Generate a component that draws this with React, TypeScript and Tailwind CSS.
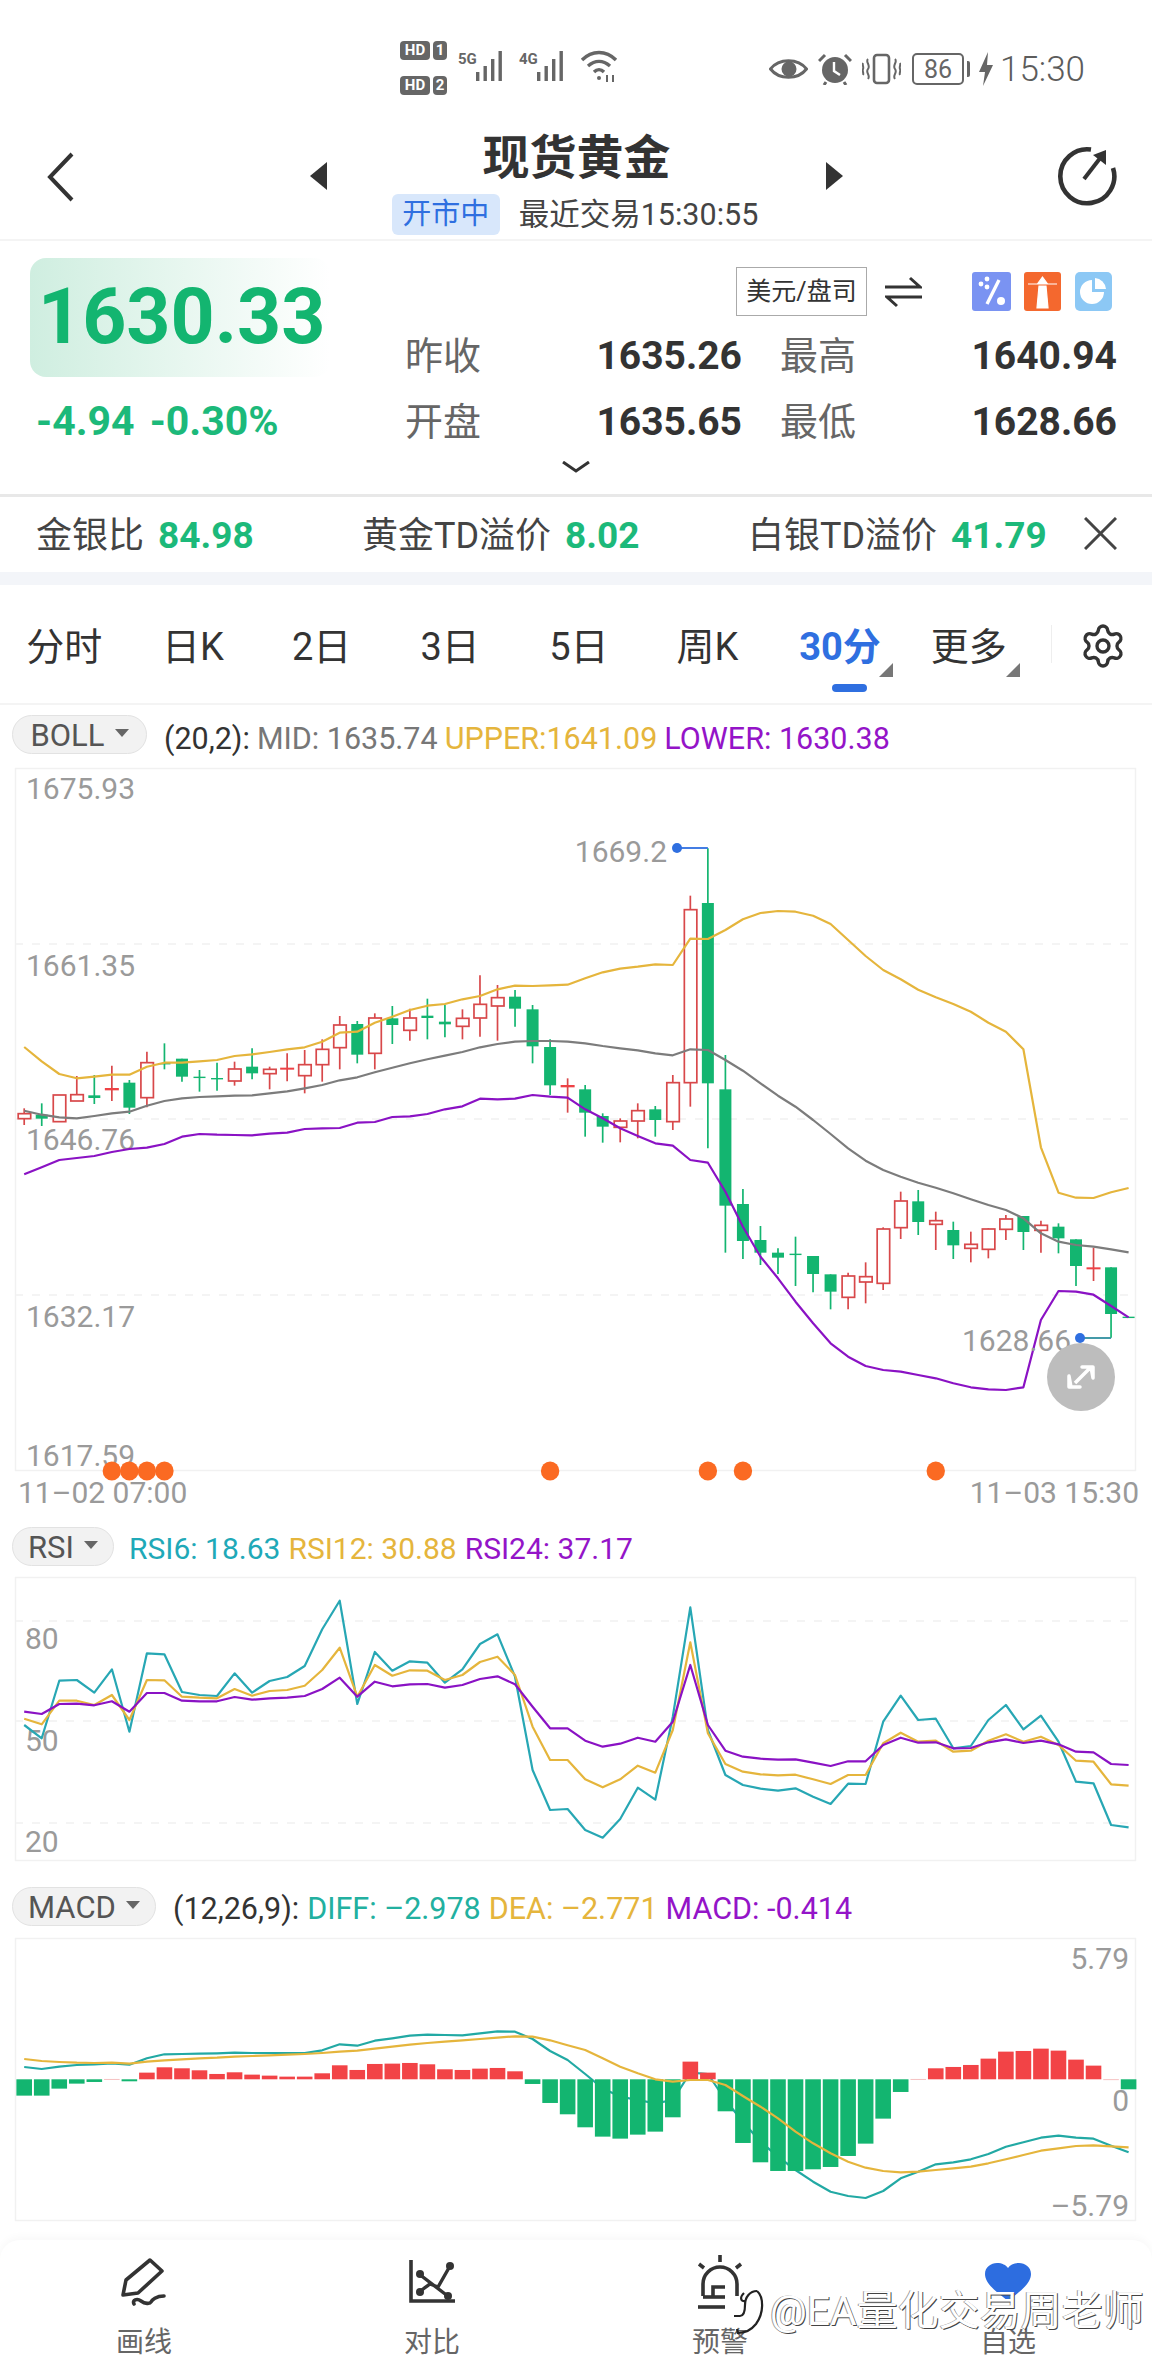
import React from 'react';
import { Settings } from 'lucide-react';

// all chart numbers are read off 3x crops: y = top + value / 3, x comes from the candle index
const cx = (i: number) => 24.2 + 17.53 * i;

type Candle = [number, number, number, number, 'r' | 'g'];

const candles: Candle[] = [
  [1165, 1181, 1196, 1215, 'r'], [1150, 1184, 1196, 1218, 'g'], [1125, 1125, 1205, 1205, 'r'], [1068, 1124, 1143, 1143, 'r'],
  [1065, 1126, 1134, 1152, 'g'], [1037, 1104, 1111, 1143, 'r'], [1080, 1088, 1163, 1182, 'g'], [995, 1028, 1133, 1162, 'r'],
  [970, 1029, 1031, 1048, 'g'], [1016, 1016, 1070, 1085, 'g'], [1050, 1070, 1073, 1115, 'g'], [1028, 1074, 1076, 1112, 'g'],
  [1025, 1047, 1083, 1097, 'r'], [985, 1040, 1060, 1078, 'g'], [1040, 1048, 1061, 1108, 'r'], [1000, 1043, 1047, 1084, 'r'],
  [990, 1034, 1067, 1120, 'r'], [958, 988, 1034, 1085, 'r'], [888, 915, 983, 1048, 'r'], [903, 912, 1004, 1030, 'g'],
  [880, 894, 1000, 1048, 'r'], [858, 895, 915, 972, 'g'], [866, 894, 931, 962, 'r'], [836, 887, 894, 958, 'g'],
  [855, 905, 913, 952, 'g'], [868, 895, 919, 958, 'r'], [766, 853, 894, 950, 'r'], [795, 833, 858, 962, 'r'],
  [810, 830, 866, 920, 'g'], [855, 868, 979, 1030, 'g'], [958, 981, 1096, 1125, 'g'], [1075, 1095, 1102, 1178, 'r'],
  [1095, 1108, 1178, 1250, 'g'], [1180, 1188, 1220, 1268, 'g'], [1195, 1203, 1222, 1267, 'r'], [1150, 1172, 1203, 1255, 'r'],
  [1158, 1168, 1200, 1250, 'g'], [1065, 1088, 1205, 1230, 'r'], [527, 569, 1088, 1160, 'r'], [385, 549, 1090, 1285, 'g'],
  [1005, 1108, 1457, 1598, 'g'], [1407, 1452, 1563, 1617, 'g'], [1518, 1560, 1598, 1635, 'g'], [1585, 1598, 1613, 1662, 'g'],
  [1550, 1601, 1605, 1698, 'g'], [1608, 1608, 1662, 1717, 'g'], [1663, 1663, 1715, 1768, 'g'], [1658, 1668, 1732, 1768, 'r'],
  [1627, 1670, 1686, 1750, 'r'], [1522, 1527, 1690, 1710, 'r'], [1415, 1443, 1523, 1557, 'r'], [1410, 1444, 1506, 1545, 'g'],
  [1475, 1502, 1513, 1590, 'r'], [1505, 1530, 1576, 1617, 'g'], [1535, 1573, 1585, 1627, 'r'], [1525, 1527, 1588, 1615, 'r'],
  [1485, 1497, 1528, 1560, 'r'], [1488, 1488, 1536, 1590, 'g'], [1502, 1516, 1531, 1598, 'r'], [1510, 1520, 1555, 1600, 'g'],
  [1558, 1558, 1638, 1698, 'g'], [1583, 1642, 1646, 1683, 'r'], [1642, 1642, 1782, 1853, 'g'], [1791, 1790, 1792, 1793, 'g'],
];

const upper = [981, 1024, 1062, 1075, 1070, 1064, 1064, 1040, 1028, 1028, 1024, 1020, 1008, 1003, 996, 988, 982, 965, 938, 935, 908, 890, 870, 857, 852, 838, 828, 808, 797, 798, 796, 794, 775, 757, 746, 740, 733, 735, 656, 657, 630, 598, 579, 573, 575, 587, 612, 660, 708, 750, 778, 809, 832, 852, 875, 908, 935, 988, 1282, 1418, 1433, 1434, 1417, 1404];
const middle = [1172, 1184, 1192, 1195, 1188, 1180, 1175, 1157, 1143, 1135, 1131, 1129, 1127, 1126, 1120, 1114, 1105, 1095, 1081, 1072, 1057, 1043, 1030, 1018, 1007, 996, 982, 972, 965, 963, 963, 965, 970, 978, 985, 991, 1000, 1006, 988, 990, 1020, 1052, 1090, 1127, 1160, 1200, 1242, 1285, 1322, 1350, 1370, 1388, 1403, 1420, 1438, 1455, 1470, 1495, 1540, 1565, 1575, 1580, 1588, 1597];
const lower = [1363, 1342, 1320, 1314, 1308, 1296, 1287, 1283, 1272, 1250, 1242, 1244, 1245, 1246, 1241, 1238, 1227, 1225, 1224, 1208, 1206, 1191, 1189, 1182, 1168, 1159, 1136, 1138, 1136, 1125, 1130, 1133, 1168, 1195, 1225, 1248, 1270, 1277, 1320, 1328, 1415, 1520, 1610, 1675, 1745, 1810, 1870, 1910, 1938, 1950, 1955, 1965, 1975, 1990, 2002, 2008, 2010, 2002, 1800, 1713, 1715, 1724, 1758, 1792];

const rsi6 = [675, 715, 542, 540, 578, 508, 695, 460, 463, 576, 585, 588, 520, 578, 543, 531, 498, 388, 302, 612, 456, 512, 484, 488, 548, 508, 432, 403, 530, 810, 930, 927, 990, 1013, 957, 863, 899, 650, 322, 690, 825, 855, 866, 872, 865, 890, 912, 851, 852, 665, 587, 660, 656, 745, 738, 660, 615, 688, 647, 725, 845, 850, 975, 982];
const rsi12 = [656, 673, 602, 602, 615, 585, 660, 540, 541, 590, 593, 595, 567, 587, 573, 570, 557, 510, 443, 590, 495, 527, 511, 512, 540, 525, 486, 470, 525, 680, 780, 780, 838, 862, 838, 797, 818, 690, 427, 700, 792, 815, 823, 826, 824, 838, 852, 825, 825, 730, 698, 725, 722, 755, 752, 722, 703, 725, 710, 735, 782, 785, 853, 857];
const rsi24 = [635, 642, 612, 611, 616, 604, 635, 579, 579, 602, 604, 604, 591, 599, 595, 593, 588, 567, 533, 590, 545, 559, 553, 552, 563, 555, 537, 529, 553, 620, 685, 685, 722, 740, 731, 713, 725, 665, 495, 675, 752, 770, 776, 779, 778, 788, 798, 784, 784, 735, 713, 728, 727, 745, 744, 727, 718, 729, 722, 733, 755, 757, 792, 795];

const histogram = [-49, -49, -28, -13, -8, 1, -6, 20, 36, 33, 27, 16, 21, 14, 11, 8, 8, 18, 42, 28, 46, 47, 49, 45, 30, 28, 32, 34, 24, -14, -71, -105, -144, -172, -178, -166, -157, -114, 53, 20, -96, -191, -249, -275, -275, -270, -263, -230, -193, -118, -38, 1, 33, 37, 43, 62, 83, 85, 92, 86, 59, 41, -2, -30];
const diff = [591, 597, 590, 585, 583, 580, 584, 565, 553, 552, 551, 550, 548, 549, 549, 549, 549, 541, 523, 527, 512, 505, 497, 494, 495, 496, 490, 484, 485, 507, 543, 570, 612, 655, 680, 690, 700, 690, 608, 612, 690, 755, 815, 860, 900, 935, 965, 978, 984, 963, 925, 905, 883, 877, 868, 852, 830, 817, 803, 797, 803, 806, 827, 847];
const dea = [567, 573, 576, 578, 579, 578, 581, 575, 571, 568, 565, 563, 560, 558, 556, 554, 552, 549, 545, 542, 536, 530, 524, 519, 515, 511, 507, 503, 499, 500, 511, 526, 540, 565, 590, 610, 628, 635, 630, 630, 645, 678, 710, 745, 785, 820, 850, 875, 893, 903, 907, 905, 900, 895, 890, 880, 868, 855, 842, 835, 828, 826, 829, 832];

const RED = '#d8484a';
const GREEN = '#13b570';
const GOLD = '#e5b53c';

function Line({ ys, top, color, width = 2.2 }: { ys: number[]; top: number; color: string; width?: number }) {
  const points = ys.map((y, i) => `${cx(i).toFixed(1)},${(top + y / 3).toFixed(1)}`).join(' ');
  return <polyline points={points} fill="none" stroke={color} strokeWidth={width} strokeLinejoin="round" />;
}

function Frame({ x, y, w, h, rows }: { x: number; y: number; w: number; h: number; rows: number[] }) {
  return (
    <>
      <rect x={x + 0.5} y={y + 0.5} width={w - 1} height={h - 1} fill="#fff" stroke="#f1f1f1" strokeWidth="1.5" />
      {rows.map((r) => (
        <line key={r} x1={x} x2={x + w} y1={r} y2={r} stroke="#f1f1f1" strokeWidth="1.5" strokeDasharray="8 9" />
      ))}
    </>
  );
}

function CandleMark({ c, i }: { c: Candle; i: number }) {
  const [wt, bt, bb, wb, kind] = c;
  const x = cx(i);
  const y = (z: number) => 720 + z / 3;
  if (kind === 'g') {
    const thin = bb - bt < 6;
    return (
      <g>
        <line x1={x} x2={x} y1={y(wt)} y2={y(wb)} stroke={GREEN} strokeWidth="1.7" />
        <rect x={x - 6} y={y(bt)} width="12" height={Math.max((bb - bt) / 3, thin ? 1.4 : 2)} fill={GREEN} />
      </g>
    );
  }
  if (bb - bt < 10) {
    return (
      <g>
        <line x1={x} x2={x} y1={y(wt)} y2={y(wb)} stroke={RED} strokeWidth="1.7" />
        <rect x={x - 7} y={y(bt)} width="14" height={Math.max((bb - bt) / 3, 2)} fill="#ee4246" />
      </g>
    );
  }
  return (
    <g>
      <line x1={x} x2={x} y1={y(wt)} y2={y(bt)} stroke={RED} strokeWidth="1.7" />
      <line x1={x} x2={x} y1={y(bb)} y2={y(wb)} stroke={RED} strokeWidth="1.7" />
      <rect x={x - 6} y={y(bt)} width="12.5" height={(bb - bt) / 3} fill="#fff" stroke={RED} strokeWidth="1.7" />
    </g>
  );
}

function MainChart() {
  const axis = 'fill-[#9a9a9a] text-[30px]';
  return (
    <svg viewBox="15 768 1121 703" className="relative z-10 ml-[15px] block h-[703px] w-[1121px] overflow-visible">
      <Frame x={15} y={768} w={1121} h={703} rows={[944, 1119, 1295]} />
      <text x="26" y="799" className={axis}>1675.93</text>
      <text x="26" y="976" className={axis}>1661.35</text>
      <text x="26" y="1150" className={axis}>1646.76</text>
      <text x="26" y="1327" className={axis}>1632.17</text>
      <text x="26" y="1466" className={axis}>1617.59</text>
      {candles.map((c, i) => (
        <CandleMark key={i} c={c} i={i} />
      ))}
      <Line ys={middle} top={720} color="#7c7c7c" />
      <Line ys={upper} top={720} color={GOLD} />
      <Line ys={lower} top={720} color="#8a12c4" />
      <path d={`M677 848H${cx(39)}`} stroke="#2f6fe0" strokeWidth="1.8" fill="none" />
      <circle cx="677" cy="848" r="5" fill="#2f6fe0" />
      <text x="667" y="862" textAnchor="end" className={axis}>1669.2</text>
      <path d={`M1080 1338H${cx(62)}`} stroke="#2f8fa0" strokeWidth="1.8" fill="none" />
      <circle cx="1080" cy="1338" r="5" fill="#2f6fe0" />
      <text x="962" y="1351" className={axis}>1628.66</text>
      <circle cx="1081" cy="1377" r="34" fill="#bdbdbd" />
      <path d="M1091 1367l-16 16M1071 1387l-2-11-0 11h11zM1091 1367l2 11 0-11h-11z" stroke="#fff" strokeWidth="3.5" fill="#fff" strokeLinejoin="round" />
      {[5, 6, 7, 8, 30, 39, 41, 52].map((i) => (
        <ellipse key={i} cx={cx(i)} cy="1471" rx="9.2" ry="9.4" fill="#fb6a22" />
      ))}
    </svg>
  );
}

function RsiChart() {
  const axis = 'fill-[#9a9a9a] text-[30px]';
  return (
    <svg viewBox="15 1577 1121 284" className="ml-[15px] block h-[284px] w-[1121px] overflow-visible">
      <Frame x={15} y={1577} w={1121} h={284} rows={[1621, 1721, 1823]} />
      <text x="25" y="1649" className={axis}>80</text>
      <text x="25" y="1751" className={axis}>50</text>
      <text x="25" y="1852" className={axis}>20</text>
      <Line ys={rsi6} top={1500} color="#27a7b4" />
      <Line ys={rsi12} top={1500} color={GOLD} />
      <Line ys={rsi24} top={1500} color="#8a12c4" />
    </svg>
  );
}

function MacdChart() {
  const axis = 'fill-[#9a9a9a] text-[30px]';
  return (
    <svg viewBox="15 1938 1121 283" className="ml-[15px] block h-[283px] w-[1121px] overflow-visible">
      <Frame x={15} y={1938} w={1121} h={283} rows={[]} />
      <Line ys={diff} top={1870} color="#22a9a4" />
      {histogram.map((v, i) => (
        <rect
          key={i}
          x={cx(i) - 7.8}
          y={v > 0 ? 2079.3 - v / 3 : 2079.3}
          width="15.6"
          height={Math.max(Math.abs(v) / 3, 0.8)}
          fill={Math.abs(v) < 3 ? '#f3b3b3' : v > 0 ? '#f24346' : GREEN}
        />
      ))}
      <Line ys={dea} top={1870} color={GOLD} />
      <text x="1129" y="1969" textAnchor="end" className={axis}>5.79</text>
      <text x="1129" y="2111" textAnchor="end" className={axis}>0</text>
      <text x="1129" y="2216" textAnchor="end" className={axis}>–5.79</text>
    </svg>
  );
}

function Pill({ label, width }: { label: string; width: string }) {
  return (
    <div className={`flex h-[39px] items-center justify-center gap-[10px] rounded-full border border-[#e2e2e2] bg-[#f2f2f2] text-[31px] text-[#555] ${width}`}>
      <span className="pt-[3px]">{label}</span>
      <span className="mt-[-4px] h-0 w-0 border-x-[7px] border-t-[8px] border-x-transparent border-t-[#666]" />
    </div>
  );
}

function Bars() {
  return (
    <svg width="33" height="30" viewBox="0 0 33 30" fill="#666">
      <rect x="0" y="21" width="3.4" height="9" />
      <rect x="7.5" y="15" width="3.4" height="15" />
      <rect x="15" y="8" width="3.4" height="22" />
      <rect x="22.5" y="0" width="3.4" height="30" />
    </svg>
  );
}

function StatusBar() {
  return (
    <div className="flex h-[128px] pl-[400px] pt-[41px]">
      <div className="flex flex-col gap-[16px] text-[15px] font-bold leading-none text-white">
        <div className="flex gap-[3px]">
          <span className="flex h-[19px] w-[30px] items-center justify-center rounded-[4px] bg-[#666]">HD</span>
          <span className="flex h-[19px] w-[14px] items-center justify-center rounded-[4px] bg-[#666]">1</span>
        </div>
        <div className="flex gap-[3px]">
          <span className="flex h-[19px] w-[30px] items-center justify-center rounded-[4px] bg-[#666]">HD</span>
          <span className="flex h-[19px] w-[14px] items-center justify-center rounded-[4px] bg-[#666]">2</span>
        </div>
      </div>
      <div className="ml-[11px] flex h-[42px] items-start gap-[10px] text-[#666]">
        <div className="flex items-start pt-[10px]">
          <span className="mt-[1px] w-[18px] text-[15px] font-bold leading-none">5G</span>
          <Bars />
        </div>
        <div className="flex items-start pt-[10px]">
          <span className="mt-[1px] w-[18px] text-[15px] font-bold leading-none">4G</span>
          <Bars />
        </div>
        <svg width="38" height="34" viewBox="0 0 38 34" fill="none" stroke="#666" strokeWidth="3.4" className="mt-[9px]">
          <path d="M2 10c10-10 24-10 34 0M8 16c7-6 15-6 22 0M14 22c3-3 7-3 10 0" />
          <circle cx="19" cy="28" r="2" fill="#666" stroke="none" />
          <path d="M27 25v7M33 25v7" strokeWidth="2" />
        </svg>
      </div>
      <div className="ml-[151px] flex h-[56px] items-center text-[#666]">
        <svg width="39" height="24" viewBox="0 0 39 24">
          <path d="M1.5 12C10 1 29 1 37.5 12 29 23 10 23 1.5 12z" fill="none" stroke="#666" strokeWidth="3" />
          <circle cx="20" cy="12" r="7.5" fill="#666" />
        </svg>
        <svg width="34" height="32" viewBox="0 0 34 32" className="ml-[10px]">
          <circle cx="17" cy="17" r="13" fill="#666" />
          <path d="M16 9v9l6 4" stroke="#fff" strokeWidth="2.4" fill="none" />
          <path d="M1 8l6-6M33 8l-6-6M8 29l-2 3M26 29l2 3" stroke="#666" strokeWidth="3" />
        </svg>
        <svg width="39" height="32" viewBox="0 0 39 32" fill="none" stroke="#666" strokeWidth="2.6" className="ml-[10px]">
          <rect x="12" y="2" width="15" height="28" rx="3" />
          <path d="M6 6c-3 3 3 6 0 10s3 6 0 10M1 10c-1 2 1 4 0 6s1 4 0 6M33 6c3 3-3 6 0 10s-3 6 0 10M38 10c1 2-1 4 0 6s-1 4 0 6" strokeWidth="2" />
        </svg>
        <div className="ml-[11px] flex h-[32px] w-[52px] items-center justify-center rounded-[5px] border-[2px] border-[#666] text-[25px] leading-none">86</div>
        <span className="ml-[3px] h-[16px] w-[3px] rounded-r-[2px] bg-[#666]" />
        <svg width="16" height="34" viewBox="0 0 16 34" fill="#666" className="ml-[8px]">
          <path d="M10 0L1 20h6l-2 14 10-21H9z" />
        </svg>
        <span className="ml-[6px] text-[35px] font-light leading-none text-[#5c5c5c]">15:30</span>
      </div>
    </div>
  );
}

function Header() {
  return (
    <div className="flex h-[113px] border-b-[2px] border-[#f4f4f4]">
      <div className="flex w-[310px] pl-[47px] pt-[24px]">
        <svg width="28" height="50" viewBox="0 0 28 50" fill="none" stroke="#333" strokeWidth="4">
          <path d="M25 2L3 25l22 23" />
        </svg>
      </div>
      <div className="mt-[34px] h-0 w-0 border-y-[14px] border-r-[17px] border-y-transparent border-r-[#333]" />
      <div className="flex w-[499px] flex-col items-center">
        <div className="mt-[3px] text-[47px] font-bold leading-[54px] text-[#333]">现货黄金</div>
        <div className="mt-[7px] flex items-center pr-[3px]">
          <span className="flex h-[41px] w-[108px] items-center justify-center rounded-[6px] bg-[#d8e7fb] text-[29px] text-[#2f6fe0]">开市中</span>
          <span className="ml-[19px] text-[30.5px] text-[#444]">最近交易15:30:55</span>
        </div>
      </div>
      <div className="mt-[34px] h-0 w-0 border-y-[14px] border-l-[17px] border-y-transparent border-l-[#333]" />
      <div className="ml-[214px] pt-[18px]">
        <svg width="60" height="60" viewBox="0 0 60 60" fill="none" stroke="#333" strokeWidth="4.6">
          <path d="M34 3.5A27 27 0 1 0 56 22" />
          <path d="M27 33L44 11" strokeWidth="4" />
          <path d="M36 9l13-5 0 15z" fill="#333" stroke="none" />
        </svg>
      </div>
    </div>
  );
}

function Quote({ label, value }: { label: string; value: string }) {
  return (
    <div className="flex w-[337px] items-center justify-between">
      <span className="text-[38px] text-[#666]">{label}</span>
      <span className="text-[39px] font-bold text-[#333]">{value}</span>
    </div>
  );
}

function Summary() {
  return (
    <div className="h-[256px] border-b-[3px] border-[#e8e8e8]">
      <div className="flex h-[214px]">
        <div className="w-[405px] pl-[30px] pt-[17px]">
          <div className="flex h-[119px] w-[300px] items-center rounded-[16px] bg-gradient-to-r from-[#cfeee0] to-white pl-[8px]">
            <span className="text-[77px] font-bold leading-none text-[#13b570]">1630.33</span>
          </div>
          <div className="mt-[23px] flex h-[44px] items-center gap-[15px] pl-[6px] text-[41px] font-bold text-[#1cb97a]">
            <span>-4.94</span>
            <span>-0.30%</span>
          </div>
        </div>
        <div className="w-[712px]">
          <div className="mt-[26px] flex h-[49px] items-center justify-end">
            <span className="flex h-[49px] w-[131px] items-center justify-center border border-[#aaa] text-[25px] text-[#333]">美元/盘司</span>
            <svg width="37" height="32" viewBox="0 0 37 32" fill="none" stroke="#333" strokeWidth="3" className="ml-[18px]">
              <path d="M0 11h35L25 2M37 21H2l10 9" />
            </svg>
            <svg width="39" height="39" viewBox="0 0 39 39" className="ml-[50px]">
              <rect width="39" height="39" rx="3" fill="#7a93f2" />
              <path d="M27 8L15 32" stroke="#fff" strokeWidth="3.4" />
              <circle cx="9" cy="12" r="2.4" fill="#fff" /><circle cx="15" cy="7" r="2.4" fill="#fff" /><circle cx="15" cy="15" r="2.4" fill="#fff" />
              <circle cx="29" cy="29" r="4" fill="#fff" />
            </svg>
            <svg width="37" height="39" viewBox="0 0 37 39" className="ml-[13px]">
              <rect width="37" height="39" rx="3" fill="#f4682e" />
              <path d="M4 12h29M18.5 5l5 7h-10zM15 14h7l2 22H13z" fill="#fff" stroke="#fff" strokeWidth="1.2" />
            </svg>
            <svg width="37" height="39" viewBox="0 0 37 39" className="ml-[14px] mr-[5px]">
              <rect width="37" height="39" rx="5" fill="#8cc8f5" />
              <path d="M17 8a12 12 0 1 0 12 12H17z" fill="#fff" />
              <path d="M20 6a12 12 0 0 1 11 11H20z" fill="#fff" />
            </svg>
          </div>
          <div className="mt-[7px] flex h-[66px] gap-[38px]">
            <Quote label="昨收" value="1635.26" />
            <Quote label="最高" value="1640.94" />
          </div>
          <div className="flex h-[66px] gap-[38px]">
            <Quote label="开盘" value="1635.65" />
            <Quote label="最低" value="1628.66" />
          </div>
        </div>
      </div>
      <div className="mt-[6px] flex justify-center">
        <svg width="28" height="12" viewBox="0 0 28 12" fill="none" stroke="#333" strokeWidth="3">
          <path d="M1 1l13 9L27 1" />
        </svg>
      </div>
    </div>
  );
}

function Spread({ label, value, width }: { label: string; value: string; width: string }) {
  return (
    <div className={`flex items-center gap-[14px] ${width}`}>
      <span className="text-[36px] text-[#444]">{label}</span>
      <span className="text-[37px] font-bold text-[#1cb97a]">{value}</span>
    </div>
  );
}

function SpreadRow() {
  return (
    <div className="flex h-[75px] items-center pl-[36px] pt-[3px]">
      <Spread label="金银比" value="84.98" width="w-[326px]" />
      <Spread label="黄金TD溢价" value="8.02" width="w-[386px]" />
      <Spread label="白银TD溢价" value="41.79" width="w-[336px]" />
      <svg width="33" height="33" viewBox="0 0 33 33" fill="none" stroke="#444" strokeWidth="3" className="mt-[-6px]">
        <path d="M1 1l31 31M32 1L1 32" />
      </svg>
    </div>
  );
}

const tabs = ['分时', '日K', '2日', '3日', '5日', '周K'];

function Tabs() {
  return (
    <div className="flex h-[120px] border-b-[2px] border-[#f4f4f4]">
      <div className="grid w-[1029px] grid-cols-8">
        {tabs.map((t) => (
          <div key={t} className="flex h-[124px] items-center justify-center text-[38px] text-[#333]">{t}</div>
        ))}
        <div className="relative flex h-[124px] items-center justify-center pl-[8px] text-[38px] font-bold text-[#2f6fe0]">
          30分
          <span className="absolute left-[107px] top-[78px] h-0 w-0 border-b-[14px] border-l-[14px] border-b-[#777] border-l-transparent" />
          <span className="absolute left-[60px] top-[99px] h-[8px] w-[35px] rounded-full bg-[#2f6fe0]" />
        </div>
        <div className="relative flex h-[124px] items-center justify-center pl-[8px] text-[38px] text-[#333]">
          更多
          <span className="absolute left-[106px] top-[78px] h-0 w-0 border-b-[14px] border-l-[14px] border-b-[#777] border-l-transparent" />
        </div>
      </div>
      <div className="ml-[22px] mt-[40px] h-[38px] w-px bg-[#eee]" />
      <Settings size={48} strokeWidth={1.7} color="#333" className="ml-[27px] mt-[37px]" />
    </div>
  );
}

function Watermark() {
  return (
    <div className="absolute left-[731px] top-[2286px] z-20 flex items-start">
      <svg width="34" height="56" viewBox="0 0 32 56" fill="none" stroke="#222" strokeWidth="2.2">
        <path d="M2 30h6c3 0 5-4 5-11 0-8 5-14 12-14M12 7c-5 5-3 9 2 8" />
        <path d="M25 5c7 6 7 22-1 33-4 5-10 9-18 9l-1-4" />
      </svg>
      <span className="ml-[5px] mt-[5px] text-[41px] leading-none text-white [text-shadow:1px_1px_0_#444,-1px_0_0_#999]">@EA量化交易周老师</span>
    </div>
  );
}

function NavItem({ label, children }: { label: string; children: React.ReactNode }) {
  return (
    <div className="flex flex-col items-center">
      <div className="flex h-[53px] items-center justify-center">{children}</div>
      <span className="mt-[15px] text-[28px] leading-[40px] text-[#666]">{label}</span>
    </div>
  );
}

function BottomNav() {
  return (
    <div className="mt-[19px] grid h-[136px] grid-cols-4 rounded-t-[20px] pt-[15px] shadow-[0_-3px_8px_rgba(0,0,0,0.03)]">
      <NavItem label="画线">
        <svg width="46" height="48" viewBox="0 0 46 48" fill="none" stroke="#333" strokeWidth="3.6" strokeLinejoin="round" strokeLinecap="round">
          <path d="M29 2l12 11-24 22-15 2 3-15z" />
          <path d="M13 46c-2-4 3-6 7-3s9 3 10 1 5-6 13-6" />
        </svg>
      </NavItem>
      <NavItem label="对比">
        <svg width="46" height="44" viewBox="0 0 46 44" fill="none" stroke="#333" strokeWidth="3.4">
          <path d="M2 0v41h44" strokeWidth="3.6" />
          <path d="M10 14l30 23M10 32l11-8 8 3 12-21" />
          <g fill="#333" stroke="none">
            <circle cx="11" cy="14" r="4" /><circle cx="39" cy="36" r="4" /><circle cx="11" cy="32" r="4" /><circle cx="41" cy="6" r="4" />
          </g>
        </svg>
      </NavItem>
      <NavItem label="预警">
        <svg width="46" height="54" viewBox="0 0 46 54" fill="none" stroke="#333" strokeWidth="3.6">
          <path d="M23 0v7M2 9l5 4M44 9l-5 4" />
          <path d="M6 41V29a17 17 0 0 1 34 0v12" />
          <path d="M16 42V32h12" />
          <path d="M1 52h27" />
          <path d="M6 42h22" />
        </svg>
      </NavItem>
      <NavItem label="自选">
        <svg width="46" height="38" viewBox="0 0 46 38" fill="#2d6de0">
          <path d="M23 38C9 27 0 20 0 11 0 4 6 0 12 0c5 0 9 2 11 5 2-3 6-5 11-5 6 0 12 4 12 11 0 9-9 16-23 27z" />
        </svg>
      </NavItem>
    </div>
  );
}

export default function App() {
  return (
    <div className="relative h-[2376px] w-[1152px] overflow-hidden bg-white [font-family:Roboto,'Noto_Sans_CJK_SC',sans-serif]">
      <StatusBar />
      <Header />
      <Summary />
      <SpreadRow />
      <div className="h-[13px] bg-[#f3f5f9]" />
      <Tabs />

      <div className="flex h-[63px] items-start pl-[12px] pt-[10px]">
        <Pill label="BOLL" width="w-[135px]" />
        <div className="ml-[17px] flex h-[39px] items-center gap-[7px] whitespace-nowrap pt-[9px] text-[30.5px]">
          <span className="text-[#333]">(20,2):</span>
          <span className="text-[#777]">MID: 1635.74</span>
          <span className="text-[#e5b53c]">UPPER:1641.09</span>
          <span className="text-[#9414c8]">LOWER: 1630.38</span>
        </div>
      </div>
      <MainChart />
      <div className="flex h-[56px] justify-between pl-[18px] pr-[13px] pt-[1px] text-[30px] leading-[42px] text-[#9a9a9a]">
        <span>11–02 07:00</span>
        <span>11–03 15:30</span>
      </div>

      <div className="flex h-[50px] items-start pl-[12px]">
        <Pill label="RSI" width="w-[102px]" />
        <div className="ml-[15px] flex h-[39px] items-center gap-[8px] whitespace-nowrap pt-[4px] text-[30px]">
          <span className="text-[#1fa9b8]">RSI6: 18.63</span>
          <span className="text-[#e5b53c]">RSI12: 30.88</span>
          <span className="text-[#9414c8]">RSI24: 37.17</span>
        </div>
      </div>
      <RsiChart />

      <div className="flex h-[77px] items-start pl-[12px] pt-[26px]">
        <Pill label="MACD" width="w-[144px]" />
        <div className="ml-[17px] flex h-[39px] items-center gap-[8px] whitespace-nowrap pt-[5px] text-[30.5px]">
          <span className="text-[#333]">(12,26,9):</span>
          <span className="text-[#22b0a0]">DIFF: –2.978</span>
          <span className="text-[#e5b53c]">DEA: –2.771</span>
          <span className="text-[#9414c8]">MACD: -0.414</span>
        </div>
      </div>
      <MacdChart />

      <BottomNav />
      <Watermark />
    </div>
  );
}
